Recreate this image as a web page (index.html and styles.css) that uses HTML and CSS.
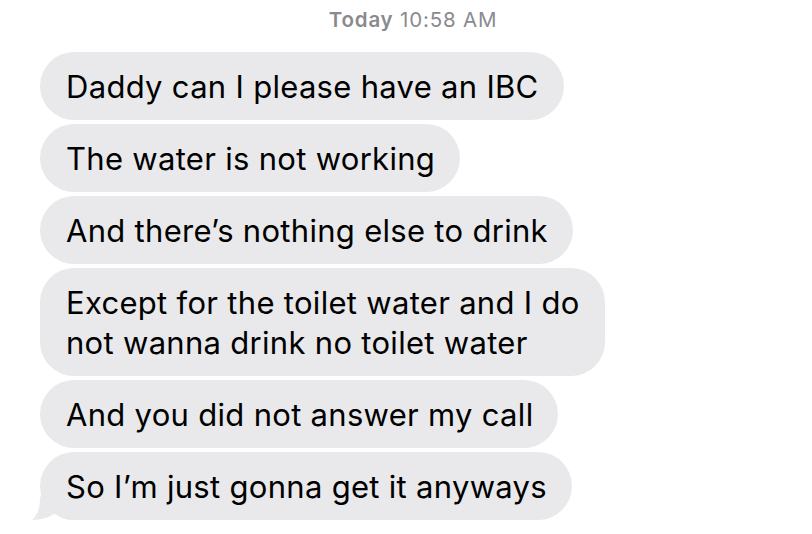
FILE: index.html
```html
<!DOCTYPE html>
<html>
<head>
<meta charset="utf-8">
<link rel="stylesheet" href="styles.css">
</head>
<body>
<div class="thread">
  <div class="stamp"><span class="day">Today</span> 10:58 AM</div>
  <div class="messages">
    <div class="bubble"><span class="txt">Daddy can I please have an IBC</span></div>
    <div class="bubble"><span class="txt">The water is not working</span></div>
    <div class="bubble"><span class="txt">And there’s nothing else to drink</span></div>
    <div class="bubble"><span class="txt">Except for the toilet water and I do<br>not wanna drink no toilet water</span></div>
    <div class="bubble"><span class="txt">And you did not answer my call</span></div>
    <div class="bubble last"><svg class="tail" width="50" height="40" viewBox="0 0 50 40"><path d="M14 8 L10 18 C10 30 6 37 2 40 C12 40 20 37 25 33 C30 37 36 40 44 40 L50 40 L50 8 Z" fill="#e9e9eb"/></svg><span class="txt">So I’m just gonna get it anyways</span></div>
  </div>
</div>
</body>
</html>
```

FILE: styles.css
```css
html, body {
  margin: 0;
  padding: 0;
  background: #ffffff;
}
.thread {
  width: 812px;
  height: 534px;
  font-family: Inter, "Liberation Sans", sans-serif;
}
.stamp {
  height: 52px;
  padding-top: 8px;
  box-sizing: border-box;
  text-align: center;
  font-size: 20.5px;
  line-height: 24px;
  letter-spacing: 0.8px;
  color: #8a8a8e;
  padding-left: 14px;
}
.day {
  font-weight: 600;
}
.messages {
  display: flex;
  flex-direction: column;
  align-items: flex-start;
  gap: 4px;
  padding-left: 40px;
}
.bubble {
  position: relative;
  background: #e9e9eb;
  color: #000;
  font-size: 31px;
  line-height: 40px;
  letter-spacing: 0.3px;
  padding: 15px 25px 13px 26px;
  border-radius: 34px;
  white-space: nowrap;
}
.txt {
  position: relative;
}
.tail {
  position: absolute;
  left: -10px;
  bottom: 0;
}
```
